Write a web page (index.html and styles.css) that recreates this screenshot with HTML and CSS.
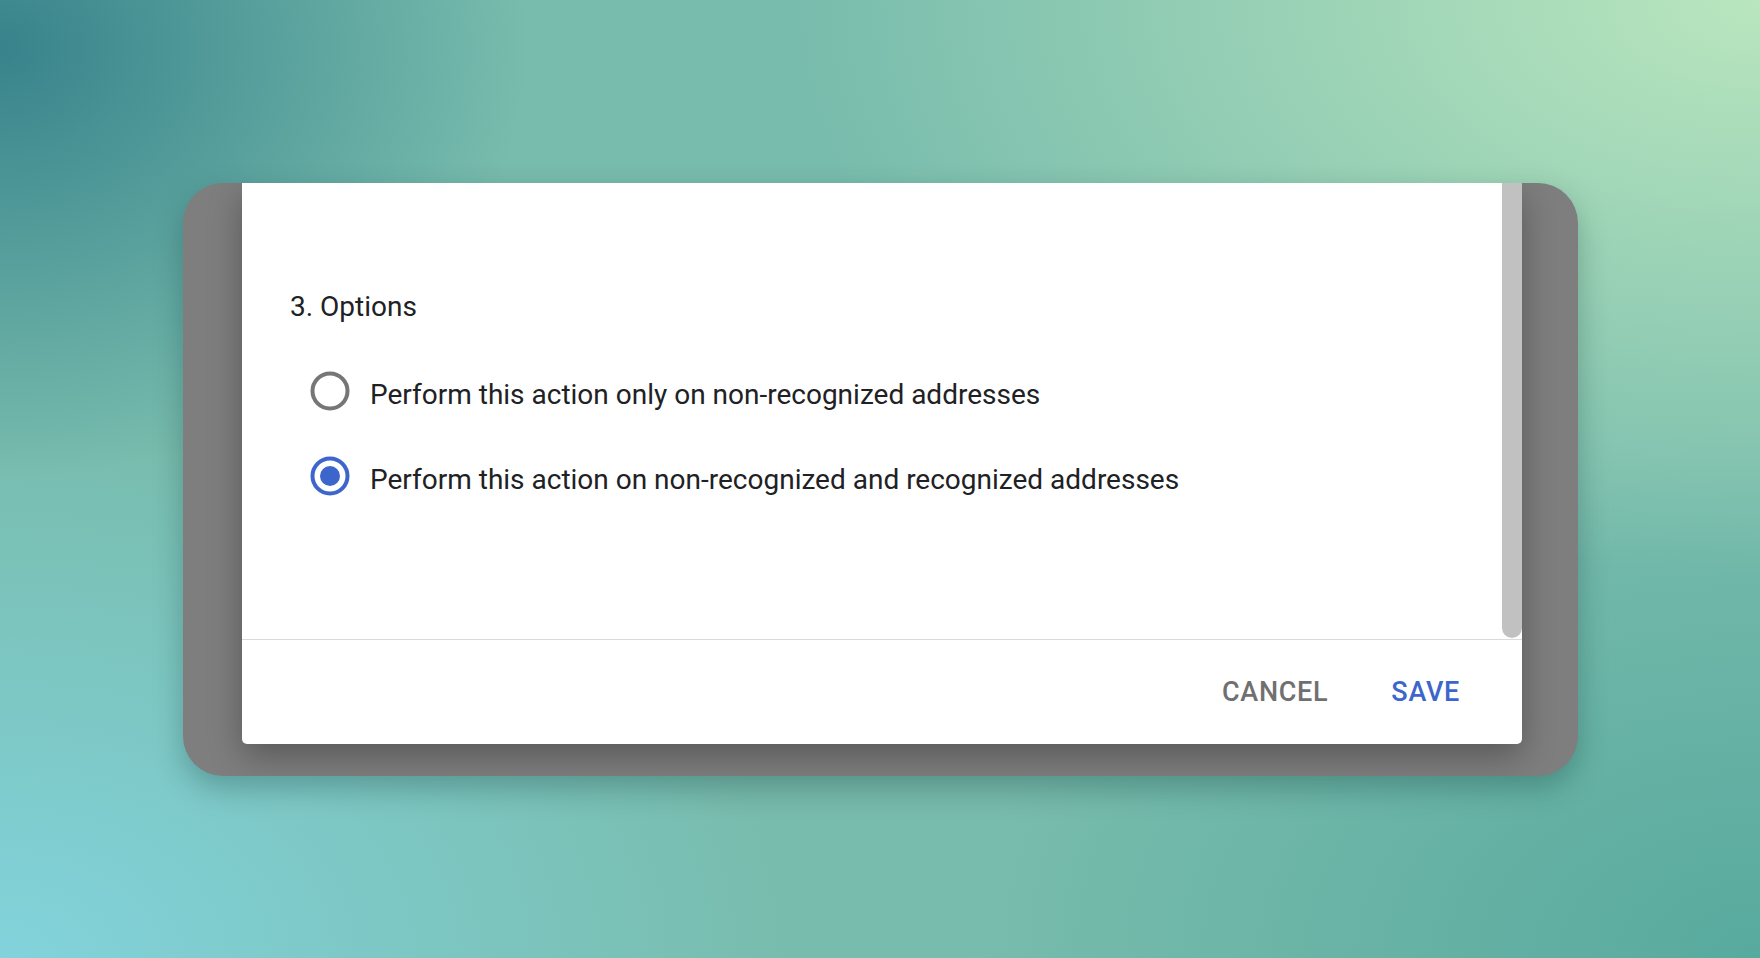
FILE: index.html
```html
<!DOCTYPE html>
<html lang="en">
<head>
<meta charset="utf-8">
<title>Options</title>
<link rel="stylesheet" href="styles.css">
</head>
<body>
  <div class="window">
    <div class="dialog">
      <div class="dialog-body">
        <div class="dialog-content">
          <h2 class="section-title">3. Options</h2>
          <div class="radio-group">
            <label class="radio-row">
              <svg class="radio" width="40" height="40" viewBox="0 0 40 40"><circle cx="20" cy="20" r="17.5" fill="none" stroke="#767676" stroke-width="4"/></svg>
              <span class="radio-label">Perform this action only on non-recognized addresses</span>
            </label>
            <label class="radio-row">
              <svg class="radio" width="40" height="40" viewBox="0 0 40 40"><circle cx="20" cy="20" r="17.5" fill="none" stroke="#3d66cc" stroke-width="4"/><circle cx="20" cy="20" r="10" fill="#3d66cc"/></svg>
              <span class="radio-label">Perform this action on non-recognized and recognized addresses</span>
            </label>
          </div>
        </div>
        <div class="scroll-thumb"></div>
      </div>
      <div class="dialog-footer">
        <button class="btn btn-cancel">CANCEL</button>
        <button class="btn btn-save">SAVE</button>
      </div>
    </div>
  </div>
</body>
</html>
```

FILE: styles.css
```css
html, body {
  margin: 0;
}
body {
  width: 1760px;
  height: 958px;
  box-sizing: border-box;
  padding: 183px 0 0 183px;
  overflow: hidden;
  font-family: Roboto, "Liberation Sans", Arial, sans-serif;
  background:
    radial-gradient(ellipse 30% 45% at 0% 5%, rgba(52,128,138,0.95) 0%, rgba(52,128,138,0) 100%),
    radial-gradient(ellipse 55% 60% at 100% 0%, #b9e6be 0%, rgba(185,230,190,0) 100%),
    radial-gradient(ellipse 45% 55% at 0% 100%, #82d3dc 0%, rgba(130,211,220,0) 100%),
    radial-gradient(ellipse 45% 55% at 100% 100%, #58aa9e 0%, rgba(88,170,158,0) 100%),
    #78bcad;
}
.window {
  width: 1395px;
  height: 593px;
  box-sizing: border-box;
  padding: 0 56px 0 59px;
  background: #7e7e7e;
  border-radius: 40px;
  overflow: hidden;
  box-shadow: 0 12px 30px rgba(0, 40, 40, 0.28);
}
.dialog {
  height: 561px;
  display: flex;
  flex-direction: column;
  background: #fff;
  border-radius: 0 0 5px 5px;
  box-shadow: 0 12px 34px rgba(0, 0, 0, 0.3);
}
.dialog-body {
  height: 456px;
  display: flex;
  border-bottom: 1px solid #dadada;
}
.dialog-content {
  flex: 1;
  padding: 107px 0 0 48px;
}
.scroll-thumb {
  width: 20px;
  height: 455px;
  background: #c1c1c1;
  border-radius: 0 0 10px 10px;
}
.section-title {
  margin: 0;
  font-size: 28px;
  font-weight: 400;
  line-height: 33px;
  color: #202124;
}
.radio-group {
  display: flex;
  flex-direction: column;
  gap: 45px;
  margin-top: 48px;
  padding-left: 20px;
}
.radio-row {
  display: flex;
  align-items: flex-start;
  gap: 20px;
  height: 40px;
}
.radio {
  display: block;
  flex: none;
}
.radio-label {
  margin-top: 4px;
  font-size: 28px;
  line-height: 40px;
  color: #202124;
}
.dialog-footer {
  flex: 1;
  display: flex;
  justify-content: flex-end;
  align-items: center;
  gap: 63px;
  padding-right: 62px;
}
.btn {
  border: 0;
  background: none;
  padding: 0;
  margin: 0;
  font-family: Roboto, "Liberation Sans", Arial, sans-serif;
  font-size: 27px;
  font-weight: 500;
  letter-spacing: 0.7px;
  line-height: 30px;
}
.btn-cancel {
  color: #707070;
}
.btn-save {
  color: #3d66cc;
}
```
